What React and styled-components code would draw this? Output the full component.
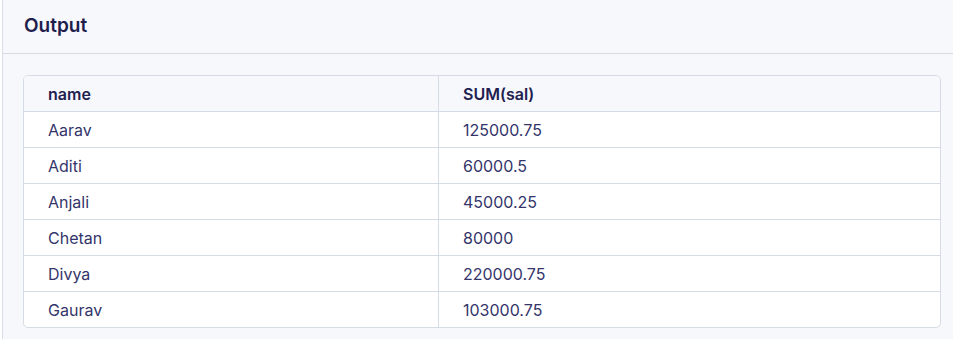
import styled, { createGlobalStyle } from 'styled-components';

const Global = createGlobalStyle`
  html, body {
    margin: 0;
    background: #ffffff;
    overflow: hidden;
  }
  body {
    font-family: Inter, "Noto Sans", sans-serif;
  }
`;

const Panel = styled.section`
  margin-left: 2px;
  width: 960px;
  height: 339px;
  background-color: #f7f8fb;
  border-left: 1px solid #d9dee7;
  box-sizing: border-box;
`;

const PanelHeader = styled.header`
  height: 54px;
  box-sizing: border-box;
  padding: 0 21px 3px;
  display: flex;
  align-items: center;
  border-bottom: 1px solid #d6dce6;
`;

const Title = styled.h3`
  margin: 0;
  font-size: 19px;
  font-weight: 600;
  color: #1f1d4d;
`;

const Body = styled.div`
  padding: 21px 0 0 20px;
`;

const Card = styled.div`
  width: 918px;
  box-sizing: border-box;
  background: #ffffff;
  border: 1px solid #d6dce6;
  border-radius: 5px;
  overflow: hidden;
`;

const Table = styled.table`
  width: 100%;
  border-collapse: collapse;
  table-layout: fixed;
`;

const Head = styled.th`
  height: 35px;
  padding: 0 24px;
  text-align: left;
  font-size: 16px;
  font-weight: 600;
  color: #22204f;
  background: #f7f8fc;
  border-bottom: 1px solid #d6dce6;
  border-left: ${(p) => (p.$first ? 'none' : '1px solid #d6dce6')};
  width: ${(p) => (p.$first ? '366px' : 'auto')};
`;

const Cell = styled.td`
  height: 35px;
  padding: 0 24px;
  font-size: 16px;
  color: #34356a;
  border-top: 1px solid #d6dce6;
  border-left: ${(p) => (p.$first ? 'none' : '1px solid #d6dce6')};
`;

const rows = [
  ['Aarav', '125000.75'],
  ['Aditi', '60000.5'],
  ['Anjali', '45000.25'],
  ['Chetan', '80000'],
  ['Divya', '220000.75'],
  ['Gaurav', '103000.75'],
];

export default function App() {
  return (
    <>
      <Global />
      <Panel>
        <PanelHeader>
          <Title>Output</Title>
        </PanelHeader>
        <Body>
          <Card>
            <Table>
              <thead>
                <tr>
                  <Head $first>name</Head>
                  <Head>SUM(sal)</Head>
                </tr>
              </thead>
              <tbody>
                {rows.map(([name, sum]) => (
                  <tr key={name}>
                    <Cell $first>{name}</Cell>
                    <Cell>{sum}</Cell>
                  </tr>
                ))}
              </tbody>
            </Table>
          </Card>
        </Body>
      </Panel>
    </>
  );
}
